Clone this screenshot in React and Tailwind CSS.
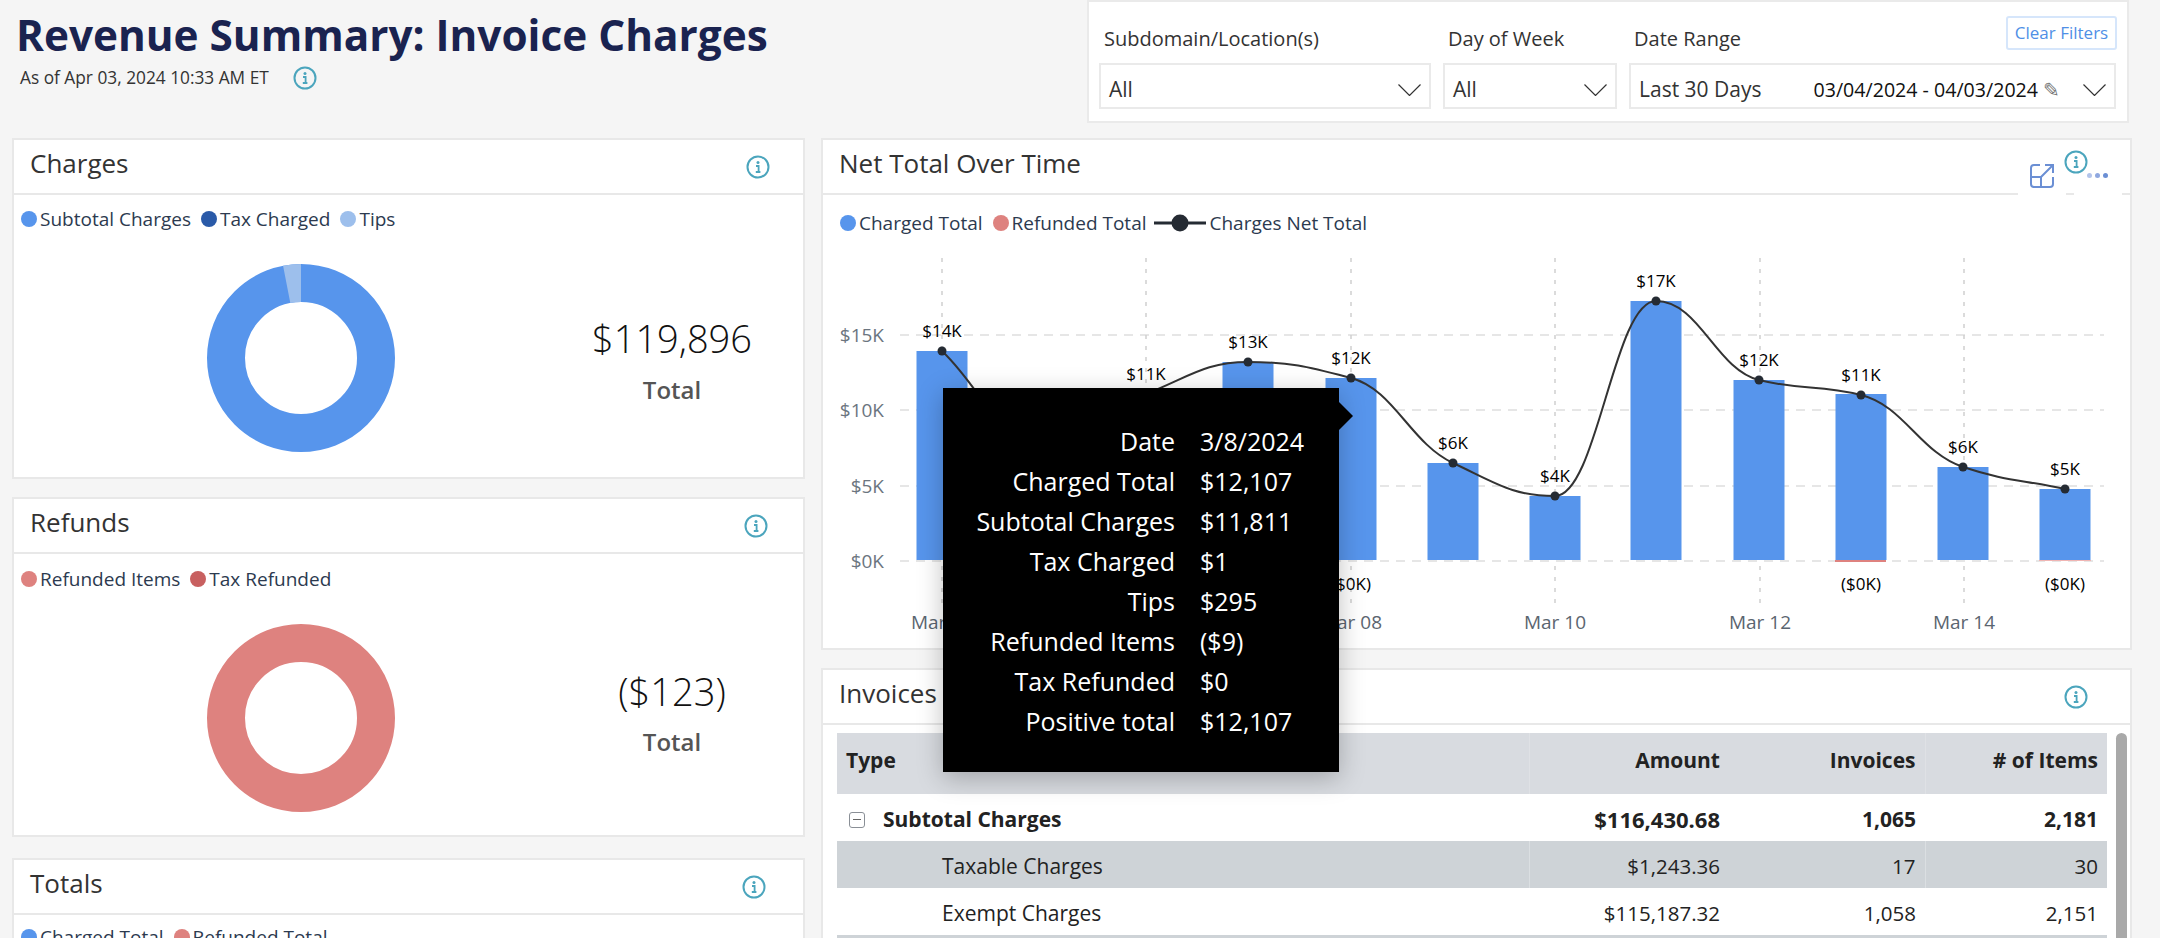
import React from "react";

const BLUE = "#5795ec";
const RED = "#de827f";

function InfoIcon({ className = "" }) {
  return (
    <svg viewBox="0 0 24 24" className={`h-6 w-6 shrink-0 ${className}`} fill="none">
      <circle cx="12" cy="12" r="10.5" stroke="#4ba5bd" strokeWidth="2" />
      <circle cx="12" cy="7.5" r="1.5" fill="#4ba5bd" />
      <path d="M10 11h2.6v5.5M9.8 17h4.6" stroke="#4ba5bd" strokeWidth="1.8" />
    </svg>
  );
}

function Chevron() {
  return (
    <svg viewBox="0 0 23 12" className="h-3 w-[23px] shrink-0" fill="none">
      <path d="M0.5 0.5L11.5 11.5L22.5 0.5" stroke="#333" strokeWidth="1.2" />
    </svg>
  );
}

function Legend({ items, className = "" }) {
  return (
    <div className={`flex h-6 items-center text-[19px] text-[#2c3a4f] ${className}`}>
      {items.map((item) => (
        <div key={item.label} className="mr-[10px] flex items-center">
          <span className="mr-[3px] h-4 w-4 rounded-full" style={{ backgroundColor: item.color }} />
          <span>{item.label}</span>
        </div>
      ))}
    </div>
  );
}

function Donut({ color, wedge }) {
  return (
    <svg viewBox="0 0 188 188" className="h-[188px] w-[188px] shrink-0" fill="none">
      <circle cx="94" cy="94" r="75" stroke={color} strokeWidth="38" />
      {wedge && (
        <circle
          cx="94"
          cy="94"
          r="75"
          stroke={wedge}
          strokeWidth="38"
          pathLength="360"
          strokeDasharray="11 349"
          transform="rotate(-101 94 94)"
        />
      )}
    </svg>
  );
}

function CardHeader({ title, iconClass, icon = true }) {
  return (
    <div className="flex h-[55px] items-center justify-between border-b-2 border-[#e8e8e8] pl-4">
      <h2 className="mb-2 text-[26px] leading-[40px] text-[#333]">{title}</h2>
      {icon && <InfoIcon className={iconClass} />}
    </div>
  );
}

// monotone curve through the net total points
function linePath(pts) {
  const slopes = [];
  for (let i = 0; i < pts.length - 1; i++) {
    slopes.push((pts[i + 1][1] - pts[i][1]) / (pts[i + 1][0] - pts[i][0]));
  }
  const tan = pts.map((_, i) => {
    if (i === 0) return slopes[0];
    if (i === pts.length - 1) return slopes[i - 1];
    if (slopes[i - 1] * slopes[i] <= 0) return 0;
    return (2 * slopes[i - 1] * slopes[i]) / (slopes[i - 1] + slopes[i]);
  });
  let d = `M${pts[0][0]} ${pts[0][1]}`;
  for (let i = 0; i < pts.length - 1; i++) {
    const h = (pts[i + 1][0] - pts[i][0]) * 0.42;
    d += ` C${pts[i][0] + h} ${pts[i][1] + tan[i] * h} ${pts[i + 1][0] - h} ${pts[i + 1][1] - tan[i + 1] * h} ${pts[i + 1][0]} ${pts[i + 1][1]}`;
  }
  return d;
}

const points = [
  { x: 942, y: 351, top: 351, label: "$14K" },
  { x: 1044, y: 448, top: 448 },
  { x: 1146, y: 394, top: 394, label: "$11K" },
  { x: 1248, y: 362, top: 362, label: "$13K" },
  { x: 1351, y: 378, top: 378, label: "$12K" },
  { x: 1453, y: 463, top: 463, label: "$6K" },
  { x: 1555, y: 496, top: 496, label: "$4K" },
  { x: 1656, y: 301, top: 301, label: "$17K" },
  { x: 1759, y: 380, top: 380, label: "$12K" },
  { x: 1861, y: 395, top: 394, label: "$11K" },
  { x: 1963, y: 467, top: 467, label: "$6K" },
  { x: 2065, y: 489, top: 489, label: "$5K" },
];

function Chart() {
  return (
    <svg viewBox="823 240 1307 408" className="mt-[5px] h-[408px] w-[1307px]">
      {[335, 410, 486, 561].map((y) => (
        <line key={y} x1="900" x2="2104" y1={y} y2={y} stroke="#e6e6e6" strokeWidth="2" strokeDasharray="9 7" />
      ))}
      {[942, 1146, 1351, 1555, 1760, 1964].map((x) => (
        <line key={x} x1={x} x2={x} y1="258" y2="604" stroke="#cfcfcf" strokeWidth="1.5" strokeDasharray="4 7" />
      ))}
      {[
        ["$15K", 335],
        ["$10K", 410],
        ["$5K", 486],
        ["$0K", 561],
      ].map(([t, y]) => (
        <text key={t} x="884" y={y + 7} textAnchor="end" fontSize="19" fill="#6b7580">
          {t}
        </text>
      ))}
      {points.map((p) => (
        <rect key={p.x} x={p.x - 25.5} y={p.top} width="51" height={560 - p.top} fill={BLUE} />
      ))}
      <rect x="1835" y="560" width="51" height="2" fill={RED} />
      <rect x="2039" y="560" width="52" height="1" fill="#f0b5b3" />
      <path d={linePath(points.map((p) => [p.x, p.y]))} fill="none" stroke="#333" strokeWidth="2" />
      {points.map((p) => (
        <circle key={p.x} cx={p.x} cy={p.y} r="4.5" fill="#252b33" />
      ))}
      {points
        .filter((p) => p.label)
        .map((p) => (
          <text key={p.x} x={p.x} y={p.y - 14} textAnchor="middle" fontSize="17" fontWeight="500" fill="#000">
            {p.label}
          </text>
        ))}
      {[1351, 1861, 2065].map((x) => (
        <text key={x} x={x} y="590" textAnchor="middle" fontSize="17" fontWeight="500" fill="#000">
          ($0K)
        </text>
      ))}
      {[
        ["Mar 04", 942],
        ["Mar 08", 1351],
        ["Mar 10", 1555],
        ["Mar 12", 1760],
        ["Mar 14", 1964],
      ].map(([t, x]) => (
        <text key={t} x={x} y="629" textAnchor="middle" fontSize="19" fill="#5b6570">
          {t}
        </text>
      ))}
    </svg>
  );
}

const rows = [
  { type: "Subtotal Charges", amount: "$116,430.68", invoices: "1,065", items: "2,181", parent: true },
  { type: "Taxable Charges", amount: "$1,243.36", invoices: "17", items: "30", shaded: true },
  { type: "Exempt Charges", amount: "$115,187.32", invoices: "1,058", items: "2,151" },
];

const tooltipRows = [
  ["Date", "3/8/2024"],
  ["Charged Total", "$12,107"],
  ["Subtotal Charges", "$11,811"],
  ["Tax Charged", "$1"],
  ["Tips", "$295"],
  ["Refunded Items", "($9)"],
  ["Tax Refunded", "$0"],
  ["Positive total", "$12,107"],
];

function InvoiceTable() {
  return (
    <table className="w-[1270px] table-fixed border-collapse text-[21px] text-[#222]">
      <colgroup>
        <col className="w-[692px]" />
        <col className="w-[201px]" />
        <col className="w-[195px]" />
        <col className="w-[182px]" />
      </colgroup>
      <thead>
        <tr className="h-[61px] bg-[#d8dbe0] align-top">
          <th className="pl-[9px] pt-3 text-left font-bold">Type</th>
          <th className="border-l border-[#dfe1e5] pr-[10px] pt-3 text-right font-bold">Amount</th>
          <th className="pr-[9px] pt-3 text-right font-bold">Invoices</th>
          <th className="border-l border-[#dfe1e5] pr-[9px] pt-3 text-right font-bold">
            # of Items
          </th>
        </tr>
      </thead>
      <tbody>
        {rows.map((r) => (
          <tr key={r.type} className={`h-[47px] ${r.shaded ? "bg-[#ced3d7]" : "bg-white"} ${r.parent ? "font-bold" : "text-[20.5px]"}`}>
            <td className="p-0 pt-1">
              {r.parent ? (
                <div className="flex items-center pl-3">
                  <span className="flex h-4 w-4 items-center justify-center rounded-[3px] border border-[#8a8f96]">
                    <span className="h-px w-2 bg-[#666]" />
                  </span>
                  <span className="ml-[18px]">{r.type}</span>
                </div>
              ) : (
                <span className="pl-[105px] text-[21px]">{r.type}</span>
              )}
            </td>
            <td className={`pr-[10px] pt-1 text-right ${r.shaded ? "border-l border-[#dbdfe2]" : ""} ${r.parent ? "text-[22px]" : ""}`}>{r.amount}</td>
            <td className="pr-[9px] pt-1 text-right">{r.invoices}</td>
            <td className={`pr-[9px] pt-1 text-right ${r.shaded ? "border-l border-[#dbdfe2]" : ""}`}>{r.items}</td>
          </tr>
        ))}
        <tr className="h-[47px] bg-[#ced3d7]">
          <td colSpan="4" />
        </tr>
      </tbody>
    </table>
  );
}

function Select({ children, className = "" }) {
  return (
    <div className={`flex h-[46px] items-center justify-between border-2 border-[#eaeaea] bg-white pl-2 pr-2 pt-2 text-[21px] text-[#333] ${className}`}>
      {children}
    </div>
  );
}

export default function App() {
  return (
    <div className="relative h-[938px] overflow-hidden bg-[#f5f5f5] font-['Open_Sans','Noto_Sans',sans-serif]">
      <div className="flex h-[138px] items-start justify-between pl-4 pr-[31px]">
        <div>
          <h1 className="mt-[6px] text-[42.3px] font-bold leading-[58px] text-[#1a2350]">
            Revenue Summary: Invoice Charges
          </h1>
          <div className="mt-[1px] flex items-center pl-1 text-[17.3px] text-[#333]">
            <span>As of Apr 03, 2024 10:33 AM ET</span>
            <InfoIcon className="ml-6" />
          </div>
        </div>

        <div className="h-[123px] w-[1042px] border-2 border-[#eaeaea] bg-white px-[10px]">
          <div className="flex h-[61px] items-center">
            <label className="mt-3 w-[344px] pl-[5px] text-[20px] font-medium text-[#333]">Subdomain/Location(s)</label>
            <label className="mt-3 w-[186px] pl-[5px] text-[20px] font-medium text-[#333]">Day of Week</label>
            <label className="mt-3 pl-[5px] text-[20px] font-medium text-[#333]">Date Range</label>
            <button className="ml-auto h-[34px] w-[111px] rounded-[3px] border-2 border-[#d6e6fb] text-[17px] text-[#4f8fe6]">
              Clear Filters
            </button>
          </div>
          <div className="flex gap-3">
            <Select className="w-[332px]">
              <span>All</span>
              <Chevron />
            </Select>
            <Select className="w-[174px]">
              <span>All</span>
              <Chevron />
            </Select>
            <Select className="w-[487px]">
              <span>Last 30 Days</span>
              <span className="ml-auto text-[19.6px] text-[#111]">03/04/2024 - 04/03/2024</span>
              <span className="ml-[5px] mr-[23px] text-[20px] leading-none text-[#777]">✎</span>
              <Chevron />
            </Select>
          </div>
        </div>
      </div>

      <div className="flex gap-4 pl-3">
        <div className="w-[793px] shrink-0">
          <section className="h-[341px] border-2 border-[#e8e8e8] bg-white">
            <CardHeader title="Charges" iconClass="mr-[33px]" />
            <Legend
              className="mt-3 pl-[7px]"
              items={[
                { label: "Subtotal Charges", color: BLUE },
                { label: "Tax Charged", color: "#2a5aa8" },
                { label: "Tips", color: "#9dbfec" },
              ]}
            />
            <div className="mt-[33px] flex pl-[193px]">
              <Donut color={BLUE} wedge="#9dbfec" />
              <div className="ml-[147px] w-[260px] shrink-0 pt-[49px] text-center">
                <div className="text-[38px] font-light leading-[50px] text-[#111]">$119,896</div>
                <div className="mt-3 text-[24px] font-semibold leading-[30px] text-[#555]">Total</div>
              </div>
            </div>
          </section>

          <section className="mt-[18px] h-[340px] border-2 border-[#e8e8e8] bg-white">
            <CardHeader title="Refunds" iconClass="mr-[35px]" />
            <Legend
              className="mt-[13px] pl-[7px]"
              items={[
                { label: "Refunded Items", color: RED },
                { label: "Tax Refunded", color: "#c86060" },
              ]}
            />
            <div className="mt-[33px] flex pl-[193px]">
              <Donut color={RED} />
              <div className="ml-[147px] w-[260px] shrink-0 pt-[42px] text-center">
                <div className="text-[38px] font-light leading-[50px] text-[#111]">($123)</div>
                <div className="mt-[11px] text-[24px] font-semibold leading-[30px] text-[#555]">Total</div>
              </div>
            </div>
          </section>

          <section className="mt-[21px] h-[200px] border-2 border-[#e8e8e8] bg-white">
            <CardHeader title="Totals" iconClass="mr-[37px]" />
            <Legend
              className="mt-[10px] pl-[7px]"
              items={[
                { label: "Charged Total", color: BLUE },
                { label: "Refunded Total", color: RED },
              ]}
            />
          </section>
        </div>

        <div className="w-[1311px] shrink-0">
          <section className="relative h-[512px] border-2 border-[#e8e8e8] bg-white">
            <CardHeader title="Net Total Over Time" icon={false} />
            <div className="absolute left-[1195px] top-[24px] flex h-[35px] w-[48px] items-start justify-center bg-white">
              <svg viewBox="0 0 24 24" className="h-6 w-6" fill="none" stroke="#6b8fd4" strokeWidth="2">
                <path d="M10 1H4a3 3 0 0 0-3 3v16a3 3 0 0 0 3 3h16a3 3 0 0 0 3-3v-7" />
                <path d="M1 13h10v10M11 13L23 1M15 1h8v8" />
              </svg>
            </div>
            <div className="absolute left-[1251px] top-[24px] flex h-[35px] w-[48px] items-start gap-[3px] bg-white pl-[13px] pt-[9px]">
              <span className="h-[5px] w-[5px] rounded-full bg-[#b3c4ea]" />
              <span className="h-[5px] w-[5px] rounded-full bg-[#8fa8e0]" />
              <span className="h-[5px] w-[5px] rounded-full bg-[#6b8fd4]" />
            </div>
            <InfoIcon className="absolute left-[1241px] top-[10px]" />
            <div className="mt-4 flex h-6 items-center pl-[17px] text-[19px] text-[#2c3a4f]">
              <span className="mr-[3px] h-4 w-4 rounded-full bg-[#5795ec]" />
              <span className="mr-[10px]">Charged Total</span>
              <span className="mr-[3px] h-4 w-4 rounded-full bg-[#de827f]" />
              <span className="mr-2">Refunded Total</span>
              <svg viewBox="0 0 52 18" className="mr-[3px] h-[18px] w-[52px]">
                <line x1="0" x2="52" y1="9" y2="9" stroke="#252b33" strokeWidth="3" />
                <circle cx="26" cy="9" r="8.5" fill="#252b33" />
              </svg>
              <span>Charges Net Total</span>
            </div>
            <Chart />
          </section>

          <section className="mt-[18px] h-[300px] border-2 border-[#e8e8e8] bg-white">
            <CardHeader title="Invoices" iconClass="mr-[42px]" />
            <div className="mt-2 flex pl-[14px]">
              <InvoiceTable />
              <div className="ml-[9px] h-[240px] w-[11px] rounded-full bg-[#a9a9a9]" />
            </div>
          </section>
        </div>
      </div>

      <div className="absolute left-[943px] top-[388px] h-[384px] w-[396px] bg-black pt-[34px] text-[25px] text-white shadow-[0_6px_24px_rgba(0,0,0,0.25)]">
        <span className="absolute left-full top-[14px] border-y-[14px] border-l-[14px] border-y-transparent border-l-black" />
        {tooltipRows.map(([label, value]) => (
          <div key={label} className="grid h-10 grid-cols-[232px_1fr] items-center gap-x-[25px]">
            <span className="text-right">{label}</span>
            <span>{value}</span>
          </div>
        ))}
      </div>
    </div>
  );
}
